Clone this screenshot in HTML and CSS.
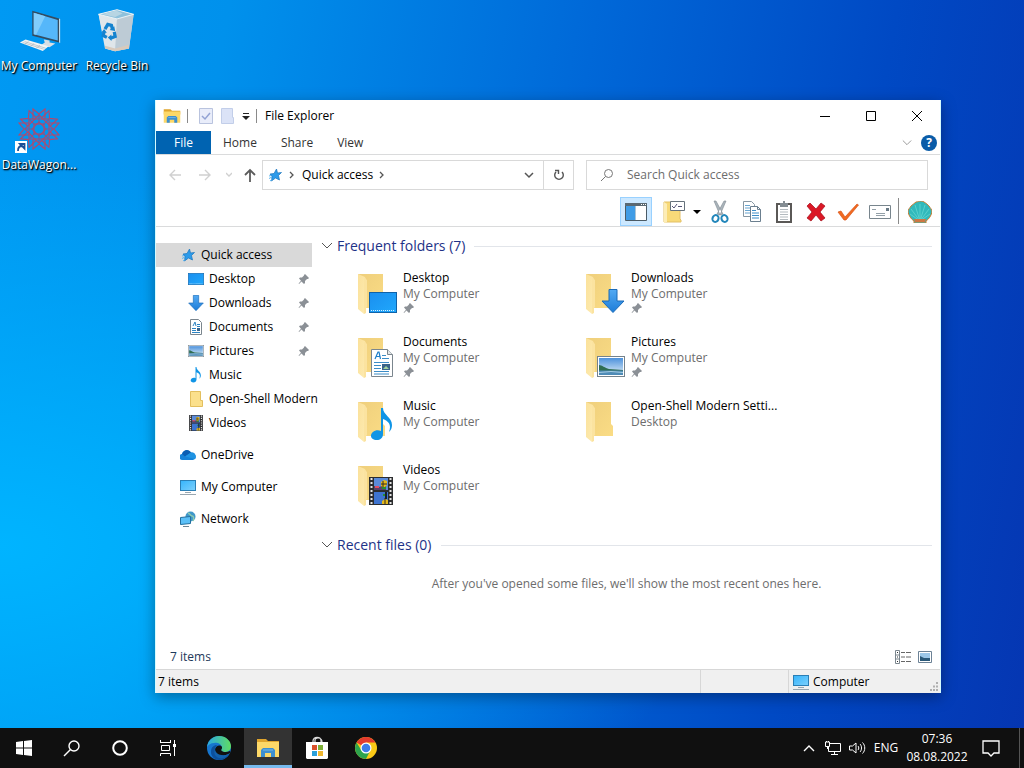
FILE: index.html
```html
<!DOCTYPE html>
<html lang="en">
<head>
    <meta charset="UTF-8">
    <meta name="viewport" content="width=device-width, initial-scale=1.0">
    <title>File Explorer</title>
    <link rel="stylesheet" href="styles.css">
</head>
<body>

    <!-- shared icons -->
    <svg class="sprite" aria-hidden="true">
        <defs>
            <linearGradient id="folderFront" x1="0" y1="0" x2="1" y2="1">
                <stop offset="0" stop-color="#fbe19a"/>
                <stop offset="1" stop-color="#fdebb2"/>
            </linearGradient>
            <linearGradient id="folderBack" x1="0" y1="0" x2="1" y2="1">
                <stop offset="0" stop-color="#efcf7c"/>
                <stop offset="1" stop-color="#fadc85"/>
            </linearGradient>
            <linearGradient id="screen" x1="0" y1="0" x2="1" y2="1">
                <stop offset="0" stop-color="#35b4fb"/>
                <stop offset="1" stop-color="#7dd0fc"/>
            </linearGradient>
            <linearGradient id="desk" x1="0" y1="0" x2="1" y2="1">
                <stop offset="0" stop-color="#1a8fef"/>
                <stop offset="1" stop-color="#20a8fc"/>
            </linearGradient>
            <linearGradient id="sky" x1="0" y1="0" x2="0" y2="1">
                <stop offset="0" stop-color="#4d92dc"/>
                <stop offset="1" stop-color="#e3f0f8"/>
            </linearGradient>
            <linearGradient id="arrowFill" x1="0" y1="0" x2="0" y2="1">
                <stop offset="0" stop-color="#53aaf3"/>
                <stop offset="1" stop-color="#1c7cd8"/>
            </linearGradient>
        </defs>
        <symbol id="folder" viewBox="0 0 40 44">
            <path d="M1 3h25v22l2 2v10H9z" fill="url(#folderBack)"/>
            <path d="M1 3l7 3 1 3v28l-2 6-6-5z" fill="url(#folderFront)"/>
            <path d="M7 6l3 3v27l-1 1v5l-2 1z" fill="#fbe3a0"/>
        </symbol>
        <symbol id="pin" viewBox="0 0 12 12">
            <path d="M7 1l4 4-1 1-1 0-2 2 0 2-1 1-2.500-2.500L1 11l-.4-.4L3 7.800 1 5.500l1-1 2 0 2-2V2z" fill="#8b9096"/>
        </symbol>
        <symbol id="star" viewBox="0 0 16 16">
            <path d="M9.500 2l1 4 4-.5-3 3 1 4.500-4-2-4 3 .5-4.500L3 7l4-.5z" fill="#2d9bea" stroke="#1874bd" stroke-width=".7"/>
            <path d="M2 11.500l3-1.500M2 9l2-.5M3 14l2-1.500" stroke="#5bb6f2" stroke-width="1"/>
        </symbol>
        <symbol id="monitor" viewBox="0 0 16 16">
            <rect x=".5" y="1.500" width="15" height="10" fill="url(#screen)" stroke="#2b7fb5"/>
            <path d="M5 13.500h6M0 15.500h16" stroke="#9aa7b0"/>
        </symbol>
        <symbol id="desktop" viewBox="0 0 28 21">
            <rect x=".5" y=".5" width="27" height="20" fill="url(#desk)" stroke="#0f62a8"/>
            <path d="M2 18.500h24" stroke="#d6f1ff" stroke-dasharray="1 1"/>
        </symbol>
        <symbol id="download" viewBox="0 0 24 24">
            <path d="M8 .5h8V12h7L12 23.500 1 12h7z" fill="url(#arrowFill)" stroke="#1b6bb8"/>
        </symbol>
        <symbol id="document" viewBox="0 0 22 28">
            <path d="M.5.5h16l5 5v22H.5z" fill="#fff" stroke="#7b868e"/>
            <path d="M16.500.5v5h5" fill="#e4e8ea" stroke="#7b868e"/>
            <path d="M4 10L7 3h1l1.500 7M5 7.500h4" fill="none" stroke="#1d7fca" stroke-width="1.200"/>
            <path d="M11 6.500h4M11 9.500h7M3 13.500h15M3 16.500h7M3 19.500h7M3 22.500h15M3 25h15" stroke="#3c8dc7"/>
            <rect x="11" y="15" width="8" height="6" fill="#3a6389"/>
            <path d="M12 20l3-3 3 3z" fill="#a4d5a0"/>
        </symbol>
        <symbol id="picture" viewBox="0 0 28 21">
            <rect x=".5" y=".5" width="27" height="20" fill="#fff" stroke="#74828c"/>
            <rect x="2" y="2" width="24" height="17" fill="url(#sky)"/>
            <path d="M2 9c3 0 6 3 10 4l14 1v1H2z" fill="#2f6d52"/>
            <path d="M2 14.500h24V19H2z" fill="#4e8bb6"/>
            <path d="M2 16.500l12-1 12 1" fill="none" stroke="#a6cde3"/>
        </symbol>
        <symbol id="music" viewBox="0 0 22 33">
            <path d="M10 0h2c0 7 9 9 9 17 0 3-1 5-3 7 3-8-1-11-6-13v15c0 4-3 6-6 6-4 0-6-2-6-4 0-4 5-7 10-5z" fill="#1095e6"/>
        </symbol>
        <symbol id="video" viewBox="0 0 24 28">
            <rect width="24" height="28" fill="#2c2d2f"/>
            <path d="M2.500 1v26M21.500 1v26" stroke="#e5e5e5" stroke-width="2" stroke-dasharray="2 2"/>
            <rect x="5" y="1" width="14" height="12" fill="#5b8bd9"/>
            <rect x="5" y="15" width="14" height="12" fill="#3e74d0"/>
            <path d="M5 9l6 1 3-3 3 1v5H5z" fill="#57436a"/>
            <path d="M12 5l3-2 3 1v4l-3 3-3-2zM13 24l3-2 3 1v4h-6z" fill="#e5b91b"/>
            <path d="M14 4v6M12 7h6M16 21v6" stroke="#332a23"/>
            <path d="M6 10h4" stroke="#e24d63" stroke-width="2"/>
            <path d="M13 11h4M14 18h4" stroke="#278d31" stroke-width="2"/>
            <path d="M17 15v7" stroke="#17202f" stroke-width="2"/>
        </symbol>
        <symbol id="explorer" viewBox="0 0 24 24">
            <path d="M1 3h9l2 2h11v5H1z" fill="#e0a52d"/>
            <path d="M1 6h22v15H1z" fill="#fdd868"/>
            <path d="M5 21v-7l2-2h10l2 2v7h-4v-4H9v4z" fill="#3e8fcf"/>
            <path d="M7 14h10" stroke="#77b9e8"/>
        </symbol>
        <symbol id="chevron" viewBox="0 0 12 12">
            <path d="M1 3l5 5 5-5" fill="none" stroke="currentColor"/>
        </symbol>
        <symbol id="caret" viewBox="0 0 8 8">
            <path d="M0 2h8L4 6z" fill="currentColor"/>
        </symbol>
    </svg>

    <main class="desktop">
        <ul class="desktop-icons">
            <li>
                <a href="#">
                    <svg width="48" height="48" viewBox="2 0 50 50">
                        <path d="M20 5l28 8v25l-28-7z" fill="#354c60"/>
                        <path d="M48 13l1 .5v25l-1-.5z" fill="#e4eaee"/>
                        <path d="M21.500 7l25 7.500V36l-25-6.500z" fill="#55b7fa"/>
                        <path d="M21.500 7l12 3.600L24 30l-2.500-.6z" fill="#80cdfc"/>
                        <path d="M32 35l6 1v2l6 1-6 4-9-2 4-3z" fill="#d9dfe4"/>
                        <path d="M13 35l24 7-6 5-24-9z" fill="#f3f4f4"/>
                        <path d="M12 37l22 7M10 38l22 7M16 37l-4 3M22 39l-4 3M28 41l-4 3" stroke="#aab7c0" stroke-width=".7"/>
                    </svg>
                    <span>My Computer</span>
                </a>
            </li>
            <li>
                <a href="#">
                    <svg width="48" height="48" viewBox="0 0 50 52">
                        <path d="M5 9l20-5 18 5-5 37-15 3-10-3z" fill="#cdd8df"/>
                        <path d="M5 9l20 5-2 35-11-3z" fill="#dfe6ea"/>
                        <path d="M25 14l18-5-5 37-15 3z" fill="#bdcbd5"/>
                        <path d="M12 43l11 3 15-4v4l-15 3-11-3z" fill="#d8cabc"/>
                        <path d="M5 9l20-5 18 5-18 5z" fill="#8fc1db" stroke="#f0f5f7"/>
                        <path d="M9 9l15-4 7 3-8 4z" fill="#b7d5e3"/>
                        <g fill="none" stroke="#1483cf" stroke-width="3.500">
                            <path d="M12 25l3-5 4 1 1 4"/>
                            <path d="M22 28l1 5-5 2"/>
                            <path d="M14 34l-4-2 1-4"/>
                        </g>
                        <path d="M17 26l6 1-1-5zM19 31v7l-4-4zM8 29l3-4 3 4z" fill="#1483cf"/>
                    </svg>
                    <span>Recycle Bin</span>
                </a>
            </li>
            <li>
                <a href="#">
                    <svg width="48" height="48" viewBox="0 0 48 48">
                        <g fill="none" stroke="#b5476a" stroke-width="1.100">
                            <g id="petals">
                                <path d="M18 14V4l6 5 6-5v10M18 34v10l6-5 6 5V34M14 18H4l5 6-5 6h10M34 18h10l-5 6 5 6H34"/>
                                <rect x="14" y="14" width="20" height="20"/>
                                <rect x="19" y="19" width="10" height="10"/>
                                <path d="M14 14l20 20M34 14L14 34" stroke-dasharray="9 10" stroke="#7a5a94"/>
                            </g>
                            <use href="#petals" transform="rotate(45 24 24)"/>
                        </g>
                        <rect x="0" y="36" width="12" height="12" fill="#fff"/>
                        <path d="M3 46c0-3 1-5 4-5M5 39h4.500v4.500z" fill="none" stroke="#1c4f95" stroke-width="1.800"/>
                    </svg>
                    <span>DataWagon...</span>
                </a>
            </li>
        </ul>

        <section class="window" aria-label="File Explorer">
            <header class="title-bar">
                <svg width="18" height="18"><use href="#explorer"/></svg>
                <span class="divider"></span>
                <button class="quick-btn" aria-label="Properties">
                    <svg width="14" height="16" viewBox="0 0 14 16">
                        <path d="M.5.5h13v15H.5z" fill="#e9edfa" stroke="#b9c3de"/>
                        <path d="M3 8l3 3 5-6" fill="none" stroke="#93a3d4" stroke-width="1.500"/>
                    </svg>
                </button>
                <button class="quick-btn" aria-label="New folder">
                    <svg width="14" height="16" viewBox="0 0 14 16">
                        <path d="M.5.5h11v9h1v6H.5z" fill="#dbe3f7" stroke="#c2cee9"/>
                    </svg>
                </button>
                <button class="quick-btn quick-menu" aria-label="Customize Quick Access Toolbar">
                    <svg width="8" height="8" viewBox="0 0 8 8"><path d="M1 1.500h6" stroke="#222"/><path d="M0 4h8L4 8z" fill="#222"/></svg>
                </button>
                <span class="divider"></span>
                <h1>File Explorer</h1>
                <div class="caption-buttons">
                    <button aria-label="Minimize"><svg width="12" height="12" viewBox="0 0 12 12"><path d="M1 6.500h10" stroke="#000"/></svg></button>
                    <button aria-label="Maximize"><svg width="12" height="12" viewBox="0 0 12 12"><path d="M1.500 1.500h9v9h-9z" fill="none" stroke="#000"/></svg></button>
                    <button aria-label="Close"><svg width="12" height="12" viewBox="0 0 12 12"><path d="M1 1l10 10M11 1L1 11" stroke="#000"/></svg></button>
                </div>
            </header>

            <div class="tabs">
                <button class="tab file-tab">File</button>
                <button class="tab">Home</button>
                <button class="tab">Share</button>
                <button class="tab">View</button>
                <button class="expand" aria-label="Expand the Ribbon"><svg width="10" height="10"><use href="#chevron"/></svg></button>
                <button class="help" aria-label="Help">?</button>
            </div>

            <div class="nav-row">
                <button class="nav-btn off" aria-label="Back"><svg width="12" height="12" viewBox="0 0 12 12"><path d="M12 6H1M6 1L1 6l5 5" fill="none" stroke="currentColor" stroke-width="1.400"/></svg></button>
                <button class="nav-btn off" aria-label="Forward"><svg width="12" height="12" viewBox="0 0 12 12"><path d="M0 6h11M6 1l5 5-5 5" fill="none" stroke="currentColor" stroke-width="1.400"/></svg></button>
                <button class="nav-btn small off" aria-label="Recent locations"><svg width="6" height="6" viewBox="0 0 6 6"><path d="M0 1l3 3 3-3" fill="none" stroke="currentColor" stroke-width="1.300"/></svg></button>
                <button class="nav-btn small" aria-label="Up"><svg width="12" height="14" viewBox="0 0 12 14"><path d="M6 14V2M1 7l5-5 5 5" fill="none" stroke="currentColor" stroke-width="1.800"/></svg></button>
                <div class="address">
                    <svg width="16" height="16"><use href="#star"/></svg>
                    <svg class="crumb-arrow" width="5" height="8" viewBox="0 0 5 8"><path d="M1 1l3 3-3 3" fill="none" stroke="#555" stroke-width="1.300"/></svg>
                    <a href="#">Quick access</a>
                    <svg class="crumb-arrow" width="5" height="8" viewBox="0 0 5 8"><path d="M1 1l3 3-3 3" fill="none" stroke="#555" stroke-width="1.300"/></svg>
                    <button class="history" aria-label="Previous locations"><svg width="10" height="10" viewBox="0 0 10 10"><path d="M1 3l4 4 4-4" fill="none" stroke="#555" stroke-width="1.500"/></svg></button>
                    <button class="refresh" aria-label="Refresh"><svg width="12" height="12" viewBox="0 0 12 12"><path d="M3 3a4.300 4.300 0 1 0 6 0M2 1.500h3.500V5" fill="none" stroke="#555" stroke-width="1.400"/></svg></button>
                </div>
                <label class="search">
                    <svg width="14" height="14" viewBox="0 0 14 14"><circle cx="8.500" cy="5.500" r="4" fill="none" stroke="#777"/><path d="M5.500 8.500L1 13" stroke="#777"/></svg>
                    <input type="search" placeholder="Search Quick access" aria-label="Search Quick access">
                </label>
            </div>

            <div class="toolbar">
                <button class="tool selected" aria-label="Folders">
                    <svg width="22" height="18" viewBox="0 0 22 18"><path d="M.5.5h21v17H.5z" fill="#fff" stroke="#4b5b66"/><path d="M0 0h22v3H0z" fill="#5a6973"/><path d="M16 1.500h1M18 1.500h1M20 1.500h1" stroke="#fff"/><path d="M1 3h9v14H1z" fill="#3f9ce6"/><path d="M10.500 3v14" stroke="#a9c3d5"/></svg>
                </button>
                <button class="tool options" aria-label="Folder options">
                    <svg width="22" height="22" viewBox="0 0 22 22"><path d="M1 1h16v17l1 1v2H1z" fill="#f8da79" stroke="#e3c066"/><path d="M1 1l3 2v18l-3 1z" fill="#fdedb6"/><path d="M7.500.5h14v9h-14z" fill="#fff" stroke="#66727c"/><path d="M9 5l2 2 3-4M15 5.500h4" fill="none" stroke="#557"/></svg>
                </button>
                <button class="tool arrow" aria-label="More options"><svg width="8" height="8"><use href="#caret"/></svg></button>
                <button class="tool" aria-label="Cut">
                    <svg width="20" height="24" viewBox="0 0 20 24"><path d="M4 1l2 0 7 13-3 1zM16 1l-2 0-7 13 3 1z" fill="#aab4bb" stroke="#7f8a92" stroke-width=".6"/><g fill="none" stroke="#2286ba" stroke-width="2"><ellipse cx="5.500" cy="18.500" rx="3" ry="3.500" transform="rotate(25 5.500 18.500)"/><ellipse cx="14.500" cy="18.500" rx="3" ry="3.500" transform="rotate(-25 14.500 18.500)"/></g></svg>
                </button>
                <button class="tool" aria-label="Copy">
                    <svg width="20" height="22" viewBox="0 0 20 22"><path d="M1.500.5h8l3 3v12h-11z" fill="#fff" stroke="#8797a3"/><path d="M3 4.500h5M3 7h5M3 9.500h5M3 12h5" stroke="#68a5d0"/><path d="M8.500 5.500h7l3 3v12h-10z" fill="#fff" stroke="#6b7f8f"/><path d="M15.500 5.500v3h3" fill="none" stroke="#6b7f8f"/><path d="M10 9.500h4M10 12h7M10 14.500h7M10 17h7" stroke="#3c8dc7"/></svg>
                </button>
                <button class="tool" aria-label="Paste">
                    <svg width="18" height="22" viewBox="0 0 18 22"><path d="M2 3h14v18H2z" fill="#fff" stroke="#5a5856" stroke-width="2"/><path d="M5 2h3V0h2v2h3v4H5z" fill="#848d93"/><path d="M5 8.500h8M5 11h8M5 13.500h8M5 16h8M5 18.500h8" stroke="#b3babf"/></svg>
                </button>
                <button class="tool" aria-label="Delete">
                    <svg width="20" height="20" viewBox="0 0 20 20"><path d="M4 1l6 6 5-6 4 3-5 6 5 6-4 3-5-6-5 6-4-3 5-6-5-6z" fill="#db1826" stroke="#a40d19" stroke-width=".7"/></svg>
                </button>
                <button class="tool" aria-label="Properties">
                    <svg width="22" height="18" viewBox="0 0 22 18"><path d="M1 9l3-1 4 6L20 1l1.500 1L9 17H7z" fill="#f16a20" stroke="#d9541a" stroke-width=".7"/></svg>
                </button>
                <button class="tool" aria-label="E-mail">
                    <svg width="22" height="14" viewBox="0 0 22 14"><path d="M.5.5h21v13H.5z" fill="#fff" stroke="#78858d"/><path d="M3 4.500h4M7 8.500h9M7 10.500h9" stroke="#93a0a8"/><path d="M17 3h3v3h-3z" fill="#687985"/></svg>
                </button>
                <span class="divider"></span>
                <button class="tool" aria-label="Classic Explorer settings">
                    <svg width="24" height="22" viewBox="0 0 24 22"><path d="M6 20c-3-2-5-5-6-9 0-3 2-4 3-6 2-1 3-3 5-4 2 0 3-1 4-1s3 0 4 1c2 1 4 3 5 4 1 2 3 3 3 6-1 4-3 7-6 9v2H6z" fill="#31b9bb" stroke="#c97e35"/><path d="M12 20V3M12 20L7 4M12 20l5-16M12 20L3 8M12 20l9-12M12 20L2 13M12 20l10-7" stroke="#63d6d3" stroke-width=".8"/><path d="M6 18h12l-1 3H7z" fill="#ce7744"/></svg>
                </button>
            </div>

            <div class="body">
                <nav class="sidebar" aria-label="Folders">
                    <ul>
                        <li><a class="current" href="#"><svg width="16" height="16"><use href="#star"/></svg>Quick access</a>
                            <ul>
                                <li><a href="#"><svg width="16" height="16"><use href="#desktop"/></svg><span>Desktop</span><svg class="pin" width="12" height="12"><use href="#pin"/></svg></a></li>
                                <li><a href="#"><svg width="16" height="16"><use href="#download"/></svg><span>Downloads</span><svg class="pin" width="12" height="12"><use href="#pin"/></svg></a></li>
                                <li><a href="#"><svg width="16" height="16" viewBox="0 0 16 16"><path d="M2.500.5h8l3 3v12h-11z" fill="#fff" stroke="#7b868e"/><path d="M5 7l2-4 1 4M9 5.500h3M4 9.500h4M4 11.500h4M4 13.500h8M9 7.500h3" fill="none" stroke="#2c83c2"/><path d="M9 9h3v3H9z" fill="#3a6389"/></svg><span>Documents</span><svg class="pin" width="12" height="12"><use href="#pin"/></svg></a></li>
                                <li><a href="#"><svg width="16" height="16"><use href="#picture"/></svg><span>Pictures</span><svg class="pin" width="12" height="12"><use href="#pin"/></svg></a></li>
                                <li><a href="#"><svg width="16" height="16"><use href="#music"/></svg><span>Music</span></a></li>
                                <li><a href="#"><svg width="16" height="16" viewBox="0 0 16 16"><path d="M2.500.5h10v9h2v6h-12z" fill="#fbe08c" stroke="#e3bf5e"/></svg><span>Open-Shell Modern</span></a></li>
                                <li><a href="#"><svg width="16" height="16"><use href="#video"/></svg><span>Videos</span></a></li>
                            </ul>
                        </li>
                        <li><a href="#"><svg width="16" height="16" viewBox="0 0 16 16"><path d="M3 13a3 3 0 0 1-1-6C3 3 8 2 11 5.500c4-.5 6 4 4 6.500l-2 1z" fill="#1683d8"/><path d="M2 7c2-5 7-5 9-1.500L5 9.500z" fill="#0a5eb3"/><path d="M5 9.500l6-4c4-.5 6 4 4 6.500z" fill="#1f93e2"/></svg>OneDrive</a></li>
                        <li><a href="#"><svg width="16" height="16"><use href="#monitor"/></svg>My Computer</a></li>
                        <li><a href="#"><svg width="16" height="16" viewBox="0 0 16 16"><circle cx="10.500" cy="5.500" r="5" fill="#3f97c9"/><path d="M8 2c3 1 2 3 4 3s2 3 1 5" fill="none" stroke="#8cc9b0" stroke-width="1.500"/><path d="M.5 6.500l10-1v7l-10 1z" fill="#5bc0f8" stroke="#23709f"/><path d="M3 15.500h6" stroke="#6d8797"/></svg>Network</a></li>
                    </ul>
                </nav>

                <div class="content">
                    <h2><svg width="12" height="12"><use href="#chevron"/></svg>Frequent folders (7)</h2>
                    <ul class="folders">
                        <li><a href="#">
                            <span class="thumb"><svg width="40" height="44"><use href="#folder"/></svg><svg class="overlay" width="28" height="21"><use href="#desktop"/></svg></span>
                            <span class="info"><b>Desktop</b><small>My Computer</small><svg width="12" height="12"><use href="#pin"/></svg></span>
                        </a></li>
                        <li><a href="#">
                            <span class="thumb"><svg width="40" height="44"><use href="#folder"/></svg><svg class="overlay" width="24" height="24"><use href="#download"/></svg></span>
                            <span class="info"><b>Downloads</b><small>My Computer</small><svg width="12" height="12"><use href="#pin"/></svg></span>
                        </a></li>
                        <li><a href="#">
                            <span class="thumb"><svg width="40" height="44"><use href="#folder"/></svg><svg class="overlay inset" width="22" height="28"><use href="#document"/></svg></span>
                            <span class="info"><b>Documents</b><small>My Computer</small><svg width="12" height="12"><use href="#pin"/></svg></span>
                        </a></li>
                        <li><a href="#">
                            <span class="thumb"><svg width="40" height="44"><use href="#folder"/></svg><svg class="overlay" width="28" height="21"><use href="#picture"/></svg></span>
                            <span class="info"><b>Pictures</b><small>My Computer</small><svg width="12" height="12"><use href="#pin"/></svg></span>
                        </a></li>
                        <li><a href="#">
                            <span class="thumb"><svg width="40" height="44"><use href="#folder"/></svg><svg class="overlay inset" width="22" height="33"><use href="#music"/></svg></span>
                            <span class="info"><b>Music</b><small>My Computer</small></span>
                        </a></li>
                        <li><a href="#">
                            <span class="thumb"><svg width="40" height="44"><use href="#folder"/></svg></span>
                            <span class="info"><b>Open-Shell Modern Setti...</b><small>Desktop</small></span>
                        </a></li>
                        <li><a href="#">
                            <span class="thumb"><svg width="40" height="44"><use href="#folder"/></svg><svg class="overlay inset" width="24" height="28"><use href="#video"/></svg></span>
                            <span class="info"><b>Videos</b><small>My Computer</small></span>
                        </a></li>
                    </ul>
                    <h2><svg width="12" height="12"><use href="#chevron"/></svg>Recent files (0)</h2>
                    <p class="empty">After you've opened some files, we'll show the most recent ones here.</p>
                </div>
            </div>

            <div class="details">
                <span>7 items</span>
                <button aria-label="Details view"><svg width="16" height="14" viewBox="0 0 16 14"><path d="M.5.5h4v13h-4zM.5 5h4M.5 9h4" fill="none" stroke="#7b868e"/><path d="M2 2.500h1M2 7h1M2 11.500h1" stroke="#333"/><path d="M6 2.500h4M11 2.500h5M6 7h4M11 7h5M6 11.500h4M11 11.500h5" stroke="#666"/></svg></button>
                <button aria-label="Large thumbnails"><svg width="14" height="12" viewBox="0 0 14 12"><path d="M.5.5h13v11H.5z" fill="#fff" stroke="#6c8296"/><path d="M2 2h10v8H2z" fill="#9cc7e8"/><path d="M2 5l4 2 6 0v3H2z" fill="#2a5878"/></svg></button>
            </div>

            <footer class="status-bar">
                <span class="count">7 items</span>
                <span class="blank"></span>
                <span class="zone"><svg width="16" height="16"><use href="#monitor"/></svg>Computer</span>
                <svg class="grip" width="10" height="10" viewBox="0 0 10 10"><path d="M7 1h2M4 4.500h2M7 4.500h2M1 8h2M4 8h2M7 8h2" stroke="#b0b0b0" stroke-width="2"/></svg>
            </footer>
        </section>
    </main>

    <footer class="taskbar">
        <div class="apps">
            <button aria-label="Start"><svg width="16" height="16" viewBox="0 0 16 16"><path d="M0 2l7-1v6.500H0zM8 1l8-1v7.500H8zM0 8.500h7V15l-7-1zM8 8.500h8V16l-8-1z" fill="#fff"/></svg></button>
            <button aria-label="Search"><svg width="18" height="18" viewBox="0 0 18 18"><circle cx="11" cy="7" r="5" fill="none" stroke="#fff" stroke-width="1.400"/><path d="M7.500 10.500L1 17" stroke="#fff" stroke-width="1.400"/></svg></button>
            <button aria-label="Cortana"><svg width="16" height="16" viewBox="0 0 16 16"><circle cx="8" cy="8" r="6.800" fill="none" stroke="#fff" stroke-width="2"/></svg></button>
            <button aria-label="Task View"><svg width="16" height="16" viewBox="0 0 16 16"><path d="M.5 0v3M.5 2.500h10M10.500 0v3M1.500 5.500h8v5h-8zM.5 16v-2.500h10V16M14.500 0v16" fill="none" stroke="#fff"/><path d="M13 4h3v3h-3z" fill="#fff"/></svg></button>
        </div>
        <div class="apps pinned">
            <button aria-label="Microsoft Edge">
                <svg width="24" height="24" viewBox="0 0 24 24">
                    <defs><linearGradient id="edgeTop"><stop offset="0" stop-color="#2aa7e4"/><stop offset="1" stop-color="#5fdc62"/></linearGradient></defs>
                    <circle cx="12" cy="12" r="12" fill="#1676cf"/>
                    <path d="M0 11C1 4 6 0 12 0c7 0 12 5 12 10 0 4-3 6-6 6-3 0-4-1-4-2 1-1 1-2 1-3-1-3-4-5-8-4-3 0-6 2-7 4z" fill="url(#edgeTop)"/>
                    <path d="M8 12c-1 6 5 10 14 6-2 4-6 6-10 6-5 0-8-4-8-8 0-5 3-7 6-7z" fill="#0c509d"/>
                    <path d="M14 14c1-1 1-2 1-3-2-3-7-1-7 3 0 5 7 8 15 3v-2c-4 2-8 1-9-1z" fill="#111"/>
                    <path d="M8 13c0 5 7 8 14 5-3 4-8 6-12 3-3-2-3-5-2-8z" fill="#1261ad"/>
                </svg>
            </button>
            <button class="running" aria-label="File Explorer"><svg width="24" height="24"><use href="#explorer"/></svg></button>
            <button aria-label="Microsoft Store">
                <svg width="24" height="24" viewBox="0 0 24 24"><path d="M8 8V5c0-5 8-5 8 0v3M10 8V4c0-3 7-3 7 2" fill="none" stroke="#ddd" stroke-width="1.200"/><path d="M1 6h22v16l-1 1H2l-1-1z" fill="#fff"/><path d="M7 9h5v5H7z" fill="#d9512c"/><path d="M13 9h5v5h-5z" fill="#7daf37"/><path d="M7 15h5v5H7z" fill="#2a9fd9"/><path d="M13 15h5v5h-5z" fill="#f0b72f"/></svg>
            </button>
            <button aria-label="Google Chrome">
                <svg width="22" height="22" viewBox="0 0 22 22"><circle cx="11" cy="11" r="11" fill="#fbc916"/><path d="M11 11L1.500 5.500A11 11 0 0 1 20.500 5.500H11z" fill="#e33b2e"/><path d="M11 22A11 11 0 0 1 1.500 5.500l5 8L15 14z" fill="#2da44e"/><circle cx="11" cy="11" r="5.500" fill="#fff"/><circle cx="11" cy="11" r="4.300" fill="#3d7de8"/></svg>
            </button>
        </div>
        <div class="tray">
            <button aria-label="Show hidden icons"><svg width="12" height="12" viewBox="0 0 12 12"><path d="M1 9l5-5 5 5" fill="none" stroke="#fff" stroke-width="1.400"/></svg></button>
            <button aria-label="Network"><svg width="16" height="16" viewBox="0 0 16 16"><path d="M5 3.500h10.500v8H3.500V7M.5 2v4.500h4V2zM1.500 2V1M3.500 2V1M9.500 12v2.500M6 14.500h7M2.500 7v2" fill="none" stroke="#fff"/></svg></button>
            <button aria-label="Volume"><svg width="17" height="16" viewBox="0 0 17 16"><path d="M.5 6v4h3L7 13V3L3.500 6zM9 6c1 1 1 3 0 4M11 4c2 2 2 6 0 8M13.500 2.500c3 3 3 8 0 11" fill="none" stroke="#fff"/></svg></button>
            <button class="lang">ENG</button>
            <button class="clock"><span>07:36</span><span>08.08.2022</span></button>
            <button class="notify" aria-label="Notifications"><svg width="18" height="18" viewBox="0 0 18 18"><path d="M1 2h16v12h-5l-3 3-3-3H1z" fill="none" stroke="#fff" stroke-width="1.300"/></svg></button>
            <button class="peek" aria-label="Show desktop"></button>
        </div>
    </footer>

</body>
</html>
```

FILE: styles.css
```css
* {
    box-sizing: border-box;
}

body {
    margin: 0;
    height: 100vh;
    display: flex;
    flex-direction: column;
    font-family: "Open Sans", "Noto Sans", sans-serif;
    font-size: 12px;
    line-height: 16px;
    color: #000;
}

ul {
    list-style: none;
    margin: 0;
    padding: 0;
}

a {
    color: inherit;
    text-decoration: none;
}

button {
    display: flex;
    align-items: center;
    justify-content: center;
    padding: 0;
    border: none;
    background: none;
    font: inherit;
    color: inherit;
}

svg {
    flex-shrink: 0;
}

.sprite {
    position: absolute;
    width: 0;
    height: 0;
}

.divider {
    width: 1px;
    height: 14px;
    background-color: #8a8a8a;
}

/* desktop */
.desktop {
    position: relative;
    flex: 1;
    min-height: 0;
    background: radial-gradient(ellipse at 0% 75%, #00b4ff 0%, rgba(0, 176, 255, 0) 50%),
        linear-gradient(100deg, #0099f3 0%, #0091ec 20%, #0068d8 52%, #0049c4 78%, #0536b2 100%);
}

.desktop-icons {
    display: grid;
    grid-template-columns: 78px 78px;
    grid-auto-rows: 99px;
    padding-top: 6px;
}

.desktop-icons a {
    display: flex;
    flex-direction: column;
    align-items: center;
    gap: 4px;
    color: #fff;
    white-space: nowrap;
    text-shadow: 1px 1px 2px #000, 1px 1px 1px #000;
}

/* window */
.window {
    position: absolute;
    top: 100px;
    right: 83px;
    bottom: 35px;
    left: 155px;
    display: flex;
    flex-direction: column;
    background-color: #fff;
    border: 1px solid #d4fbff;
    border-top: none;
    border-bottom: none;
    box-shadow: 0 4px 14px rgba(0, 0, 0, 0.35);
}

.title-bar {
    display: flex;
    align-items: center;
    height: 31px;
    padding-left: 7px;
    gap: 6px;
}

.title-bar h1 {
    margin: 0 auto 0 2px;
    font-size: 12px;
    font-weight: normal;
}

.quick-btn {
    width: 16px;
    height: 22px;
}

.title-bar .divider + .quick-btn {
    margin-left: 4px;
}

.quick-menu {
    width: 8px;
}

.caption-buttons {
    display: flex;
    align-self: stretch;
}

.caption-buttons button {
    width: 46px;
}

.tabs {
    display: flex;
    align-items: stretch;
    height: 24px;
    border-bottom: 1px solid #dadbdc;
    color: #333;
}

.tab {
    padding: 0 12px;
}

.file-tab {
    padding: 0 18px;
    background-color: #0063b1;
    color: #fff;
}

.expand {
    margin-left: auto;
    width: 22px;
    color: #888;
}

.help {
    align-self: center;
    width: 16px;
    height: 16px;
    margin: 0 3px;
    border-radius: 50%;
    background-color: #0a5ca8;
    color: #fff;
    font-weight: bold;
}

.nav-row {
    display: flex;
    align-items: center;
    height: 40px;
    padding: 0 12px 0 4px;
}

.nav-btn {
    width: 30px;
    height: 30px;
    color: #5c5c5c;
}

.nav-btn.small {
    width: 18px;
}

.nav-btn.small + .nav-btn.small {
    width: 24px;
}

.nav-btn.off {
    color: #d0d0d0;
}

.address,
.search {
    display: flex;
    align-items: center;
    height: 30px;
    border: 1px solid #d9d9d9;
}

.address {
    flex: 306;
    padding-left: 4px;
}

.crumb-arrow {
    margin: 0 8px 0 6px;
}

.history {
    width: 28px;
    height: 28px;
    margin-left: auto;
}

.refresh {
    width: 30px;
    height: 28px;
    border-left: 1px solid #d9d9d9;
}

.search {
    flex: 314;
    margin-left: 12px;
    padding: 0 13px;
    gap: 13px;
}

.search input {
    flex: 1;
    min-width: 0;
    padding: 0;
    border: none;
    outline: none;
    background: none;
    font: inherit;
}

.search input::placeholder {
    color: #6d6d6d;
    opacity: 1;
}

.toolbar {
    display: flex;
    align-items: flex-end;
    justify-content: flex-end;
    height: 32px;
    padding-right: 4px;
    border-bottom: 1px solid #dadbdc;
}

.tool {
    width: 32px;
    height: 29px;
}

.tool.selected {
    background-color: #cce8ff;
    border: 1px solid #99d1ff;
}

.tool.options {
    margin-left: 6px;
}

.tool.arrow {
    width: 14px;
}

.toolbar .divider {
    height: 26px;
    margin: 0 5px 2px 2px;
}

/* folders pane and content */
.body {
    flex: 1;
    min-height: 0;
    display: flex;
}

.sidebar {
    width: 156px;
    padding-top: 16px;
}

.sidebar > ul {
    display: flex;
    flex-direction: column;
    gap: 8px;
}

.sidebar a {
    display: flex;
    align-items: center;
    gap: 5px;
    height: 24px;
    padding-left: 24px;
    white-space: nowrap;
}

.sidebar ul ul a {
    padding-left: 32px;
}

.sidebar span {
    flex: 1;
}

.sidebar .pin {
    margin-right: 2px;
}

.current {
    background-color: #d9d9d9;
}

.content {
    flex: 1;
    min-width: 0;
    padding: 8px 8px 0 9px;
}

.content h2 {
    display: flex;
    align-items: center;
    gap: 4px;
    height: 22px;
    margin: 0;
    font-size: 14px;
    font-weight: normal;
    color: #1e3287;
}

.content h2 svg {
    color: #555;
}

.content h2::after {
    content: "";
    flex: 1;
    height: 1px;
    margin-left: 5px;
    background-color: #e2e5ea;
}

.folders {
    display: grid;
    grid-template-columns: repeat(auto-fill, 228px);
    grid-auto-rows: 64px;
    padding: 13px 0 8px 36px;
}

.folders a {
    display: flex;
    gap: 6px;
}

.thumb {
    position: relative;
    width: 40px;
    height: 44px;
    margin-top: 1px;
}

.overlay {
    position: absolute;
    right: 0;
    bottom: 2px;
}

.overlay.inset {
    right: 4px;
}

.info {
    display: flex;
    flex-direction: column;
}

.info b,
.info small {
    font-size: 12px;
    font-weight: normal;
}

.info small {
    color: #6d6d6d;
}

.empty {
    margin: 20px 0 0;
    text-align: center;
    color: #6d6d6d;
}

.details {
    display: flex;
    align-items: center;
    gap: 7px;
    height: 24px;
    padding: 0 8px 0 14px;
    color: #1e395b;
}

.details span {
    margin-right: auto;
}

.status-bar {
    position: relative;
    display: flex;
    align-items: stretch;
    height: 24px;
    line-height: 24px;
    background-color: #f0f0f0;
    border-top: 1px solid #d7d7d7;
}

.count {
    flex: 1;
    padding-left: 2px;
}

.blank {
    width: 88px;
    border-left: 1px solid #d7d7d7;
}

.zone {
    display: flex;
    align-items: center;
    gap: 4px;
    width: 152px;
    padding-left: 4px;
    border-left: 1px solid #d7d7d7;
}

.grip {
    position: absolute;
    right: 1px;
    bottom: 1px;
}

/* taskbar */
.taskbar {
    display: flex;
    justify-content: space-between;
    height: 40px;
    background-color: #101010;
    color: #fff;
}

.apps,
.tray {
    display: flex;
}

.apps button {
    width: 48px;
}

.pinned {
    gap: 1px;
    margin: 0 auto 0 3px;
}

.running {
    background-color: #333;
    border-bottom: 3px solid #76b9ed;
    padding-top: 3px;
}

.tray button {
    width: 24px;
}

.tray .lang {
    width: 34px;
}

.tray .clock {
    flex-direction: column;
    gap: 2px;
    width: 68px;
}

.tray .notify {
    width: 40px;
}

.tray .peek {
    width: 5px;
    margin-left: 8px;
    border-left: 1px solid #555;
}
```
